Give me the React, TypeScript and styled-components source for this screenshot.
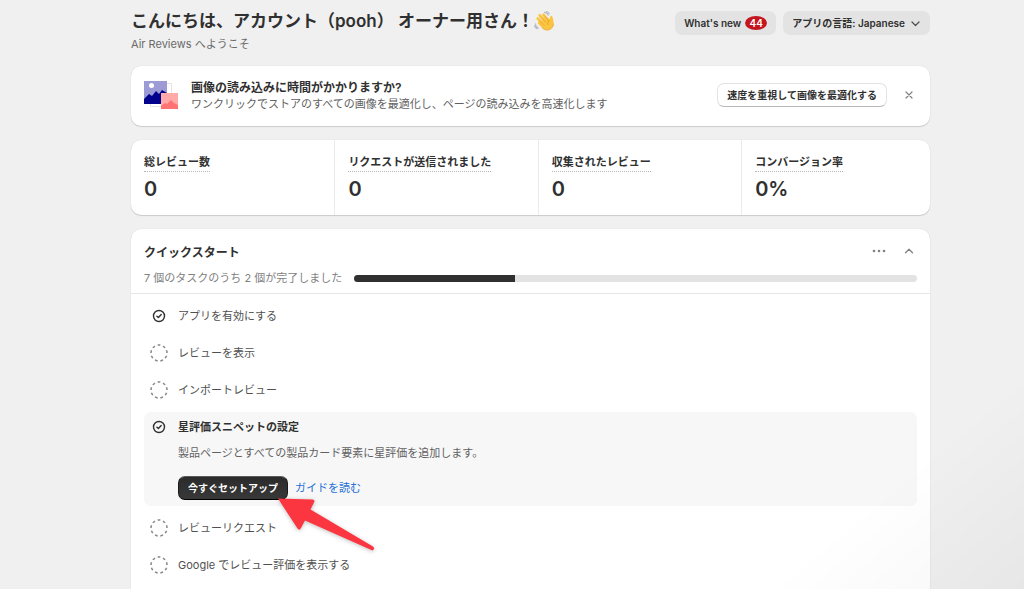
import React from 'react';
import styled, { createGlobalStyle, css } from 'styled-components';

const GlobalStyle = createGlobalStyle`
  *, *::before, *::after { box-sizing: border-box; }
  html, body { margin: 0; padding: 0; }
  body {
    background: #f0f0f0;
    color: #303030;
    font-family: Inter, "Noto Sans CJK JP", sans-serif;
    font-size: 11px;
    line-height: 16px;
  }
  button, a { font-family: inherit; }
  h1, h2, h3, p, dl, dd, ul { margin: 0; padding: 0; }
`;

const Shade = styled.div`
  position: fixed;
  inset: 0;
  pointer-events: none;
  background: linear-gradient(140deg, transparent 85%, rgba(0, 0, 0, 0.035) 100%);
`;

const Page = styled.main`
  min-height: 100vh;
  display: flex;
  flex-direction: column;
  gap: 14px;
  padding: 9px 94px 0 131px;
`;

const PageHeader = styled.header`
  display: flex;
  justify-content: space-between;
  align-items: flex-start;
  height: 43px;
`;

const Title = styled.h1`
  display: flex;
  align-items: center;
  font-size: 17px;
  line-height: 24px;
  font-weight: 600;
`;

const Subtitle = styled.p`
  color: #6a6a6a;
  line-height: 22px;
`;

const HeaderActions = styled.div`
  display: flex;
  gap: 7px;
  padding-top: 2px;
`;

const GreyButton = styled.button`
  display: flex;
  align-items: center;
  gap: 4px;
  height: 24px;
  padding: 0 9px;
  border: 0;
  border-radius: 7px;
  background: #e3e3e3;
  color: #303030;
  font-size: 10px;
  line-height: 16px;
  font-weight: 600;
`;

const Count = styled.span`
  padding: 0 4px;
  min-width: 22px;
  border-radius: 50%;
  background: #c5161f;
  color: #fff;
  font-size: 10px;
  line-height: 14px;
`;

const Card = styled.section`
  background: #fff;
  border-radius: 10px;
  box-shadow: 0 1px 1px rgba(0, 0, 0, 0.14), 0 0 1px rgba(0, 0, 0, 0.16);
`;

const Banner = styled(Card)`
  display: flex;
  align-items: center;
  height: 60px;
  padding: 0 13px 3px;
`;

const BannerText = styled.div`
  flex: 1;
  padding: 2px 0 0 12px;
`;

const BannerTitle = styled.h2`
  font-size: 12px;
  line-height: 17px;
  font-weight: 600;
`;

const Muted = styled.p`
  color: #616161;
  line-height: 17px;
`;

const OutlineButton = styled.button`
  height: 24px;
  padding: 0 9px;
  border: 1px solid #e3e3e3;
  border-bottom-color: #b8b8b8;
  border-radius: 7px;
  background: #fff;
  color: #303030;
  font-size: 10px;
  line-height: 16px;
  font-weight: 600;
`;

const IconButton = styled.button`
  display: flex;
  align-items: center;
  justify-content: center;
  width: 16px;
  height: 16px;
  padding: 0;
  border: 0;
  background: none;
  color: #808080;
`;

const BannerClose = styled(IconButton)`
  margin-left: 14px;
`;

const Stats = styled(Card).attrs({ as: 'dl' })`
  display: grid;
  grid-template-columns: 14fr 14fr 14fr 13fr;
  height: 75px;
`;

const Stat = styled.div`
  padding: 13px 13px 0;

  & + & { border-left: 1px solid #ebebeb; }
`;

const StatLabel = styled.dt`
  width: fit-content;
  border-bottom: 1px dotted #b5b5b5;
  line-height: 18px;
  font-weight: 600;
`;

const StatValue = styled.dd`
  padding-top: 5px;
  font-size: 20px;
  line-height: 24px;
  font-weight: 600;
`;

const Panel = styled(Card)`
  flex: 1;
  border-radius: 10px 10px 0 0;
`;

const PanelHeader = styled.div`
  padding: 14px 13px 0;
  height: 65px;
  border-bottom: 1px solid #e6e6e6;
`;

const PanelTop = styled.div`
  display: flex;
  align-items: flex-start;
  gap: 14px;
  height: 20px;
`;

const PanelTitle = styled.h2`
  flex: 1;
  font-size: 12px;
  line-height: 20px;
  font-weight: 600;
`;

const ProgressRow = styled.div`
  display: flex;
  align-items: center;
  gap: 12px;
  padding-top: 7px;
  color: #808080;
`;

const Track = styled.div`
  flex: 1;
  height: 7px;
  border-radius: 4px;
  overflow: hidden;
  background: #e3e3e3;
`;

const Bar = styled.div`
  height: 100%;
  background: #303030;
`;

const Tasks = styled.ul`
  display: flex;
  flex-direction: column;
  gap: 7px;
  padding: 7px 13px;
  list-style: none;
`;

const Task = styled.li<{ $open?: boolean }>`
  display: grid;
  grid-template-columns: 18px 1fr;
  column-gap: 10px;
  align-content: start;
  padding: 6px;
  border-radius: 7px;
  color: #505050;
  ${({ $open }) =>
    $open &&
    css`
      height: 94px;
      background: #f7f7f7;
    `}
`;

const TaskIcon = styled.span`
  display: flex;
  align-items: center;
  justify-content: center;
  width: 18px;
  height: 18px;
`;

const TaskName = styled.h3<{ $open?: boolean }>`
  font-size: 11px;
  line-height: 18px;
  font-weight: ${({ $open }) => ($open ? 600 : 400)};
  color: ${({ $open }) => ($open ? '#303030' : 'inherit')};
`;

const TaskBody = styled.div`
  grid-column: 2;
  padding-top: 9px;
`;

const TaskActions = styled.div`
  position: relative;
  display: flex;
  align-items: center;
  gap: 7px;
  padding-top: 14px;
`;

const DarkButton = styled.button`
  height: 24px;
  padding: 0 9px;
  border: 1px solid #1a1a1a;
  border-top-color: #5a5a5a;
  border-bottom-color: #000;
  border-radius: 7px;
  background: linear-gradient(#2b2b2b, #383838);
  color: #fff;
  font-size: 10px;
  line-height: 16px;
  font-weight: 600;
`;

const GuideLink = styled.a`
  color: #1f6fd6;
  text-decoration: none;
`;

const Arrow = styled.svg`
  position: absolute;
  left: 94px;
  top: 30px;
  filter: drop-shadow(0 1px 2px rgba(0, 0, 0, 0.25));
`;

const Wave = () => (
  <svg width="20" height="20" viewBox="0 0 42 42" aria-hidden="true">
    <g fill="none" stroke="#b9bdc1" strokeWidth="2.500" strokeLinecap="round">
      <path d="M22 3c3 0 6 2 8 6M26 1c3 1 5 3 6 5M3 27c0 4 2 7 6 9M1 31c1 3 3 5 5 6" />
    </g>
    <g fill="none" stroke="#fcc541" strokeWidth="6" strokeLinecap="round">
      <path d="M12 9l13 16M20 8l11 16M8 16l14 15M11 25l11 10" />
    </g>
    <path d="M14 23l15-10 4 5c0-7 3-10 5-7 2 4 3 9 3 14 0 9-6 15-14 15-6 0-10-5-16-11z" fill="#fcc541" />
    <path d="M15 12l10 12M23 10l8 12M11 20l11 11M41 26c0 8-6 14-14 14-4 0-7-2-10-5" fill="none" stroke="#e89f27" strokeWidth="1.500" />
    <path d="M29 29c0-4 1-7 4-9" fill="none" stroke="#e89f27" strokeWidth="2" />
  </svg>
);

const Pictures = () => (
  <svg width="35" height="30" viewBox="0 0 35 30" aria-hidden="true">
    <path d="M6.500 3.500h21v23h-21z" fill="#fff" stroke="#e4e4e8" />
    <path d="M0 1h23v23H0z" fill="#9c9bd6" />
    <circle cx="7.500" cy="5.500" r="2.500" fill="#fff" />
    <path d="M0 19l5-5 3 2 4-5 3 3 3-4 5 3v11H0z" fill="#02028c" />
    <path d="M17 13h17v16H17z" fill="#ffa9a9" />
    <path d="M17 26l4-3 2 1 4-4 3 3 4 2v4H17z" fill="#ff7373" />
  </svg>
);

const CheckIcon = () => (
  <svg width="14" height="14" viewBox="0 0 14 14" fill="none" stroke="#303030" strokeWidth="1.400" strokeLinecap="round" strokeLinejoin="round" aria-hidden="true">
    <circle cx="7" cy="7" r="5.500" />
    <path d="M4.900 7.200l1.500 1.400 2.800-3" />
  </svg>
);

const DashedIcon = () => (
  <svg width="18" height="18" viewBox="0 0 18 18" fill="none" aria-hidden="true">
    <circle cx="9" cy="9" r="8" stroke="#84878b" strokeWidth="1.500" pathLength="90" strokeDasharray="5 5" strokeDashoffset="5" />
  </svg>
);

const stats = [
  ['総レビュー数', '0'],
  ['リクエストが送信されました', '0'],
  ['収集されたレビュー', '0'],
  ['コンバージョン率', '0%'],
];

const tasks = [
  { name: 'アプリを有効にする', done: true },
  { name: 'レビューを表示' },
  { name: 'インポートレビュー' },
  { name: '星評価スニペットの設定', done: true, open: true },
  { name: 'レビューリクエスト' },
  { name: 'Google でレビュー評価を表示する' },
];

const completed = { done: 2, total: 7 };

export default function App() {
  return (
    <>
      <GlobalStyle />
      <Page lang="ja">
        <PageHeader>
          <div>
            <Title>
              こんにちは、アカウント（pooh） オーナー用さん！
              <Wave />
            </Title>
            <Subtitle>Air Reviews へようこそ</Subtitle>
          </div>
          <HeaderActions>
            <GreyButton type="button">
              What's new <Count>44</Count>
            </GreyButton>
            <GreyButton type="button">
              アプリの言語: Japanese
              <svg width="12" height="12" viewBox="0 0 12 12" fill="none" stroke="#505050" strokeWidth="1.300" strokeLinecap="round" strokeLinejoin="round" aria-hidden="true">
                <path d="M3 5l3.500 3.500L10 5" />
              </svg>
            </GreyButton>
          </HeaderActions>
        </PageHeader>

        <Banner>
          <Pictures />
          <BannerText>
            <BannerTitle>画像の読み込みに時間がかかりますか?</BannerTitle>
            <Muted>ワンクリックでストアのすべての画像を最適化し、ページの読み込みを高速化します</Muted>
          </BannerText>
          <OutlineButton type="button">速度を重視して画像を最適化する</OutlineButton>
          <BannerClose type="button" aria-label="閉じる">
            <svg width="8" height="8" viewBox="0 0 8 8" fill="none" stroke="currentColor" strokeWidth="1.200" strokeLinecap="round">
              <path d="M1 1l6 6M7 1L1 7" />
            </svg>
          </BannerClose>
        </Banner>

        <Stats>
          {stats.map(([label, value]) => (
            <Stat key={label}>
              <StatLabel>{label}</StatLabel>
              <StatValue>{value}</StatValue>
            </Stat>
          ))}
        </Stats>

        <Panel>
          <PanelHeader>
            <PanelTop>
              <PanelTitle>クイックスタート</PanelTitle>
              <IconButton type="button" aria-label="その他">
                <svg width="14" height="4" viewBox="0 0 14 4" fill="currentColor">
                  <circle cx="2" cy="2" r="1.300" />
                  <circle cx="7" cy="2" r="1.300" />
                  <circle cx="12" cy="2" r="1.300" />
                </svg>
              </IconButton>
              <IconButton type="button" aria-label="折りたたむ">
                <svg width="10" height="6" viewBox="0 0 10 6" fill="none" stroke="currentColor" strokeWidth="1.300" strokeLinecap="round" strokeLinejoin="round">
                  <path d="M1.500 4.800L5 1.300l3.500 3.500" />
                </svg>
              </IconButton>
            </PanelTop>
            <ProgressRow>
              <span id="progress-text">7 個のタスクのうち 2 個が完了しました</span>
              <Track role="progressbar" aria-labelledby="progress-text" aria-valuenow={completed.done} aria-valuemin={0} aria-valuemax={completed.total}>
                <Bar style={{ width: `${(completed.done / completed.total) * 100}%` }} />
              </Track>
            </ProgressRow>
          </PanelHeader>
          <Tasks>
            {tasks.map(({ name, done, open }) => (
              <Task key={name} $open={open}>
                <TaskIcon>{done ? <CheckIcon /> : <DashedIcon />}</TaskIcon>
                <TaskName $open={open}>{name}</TaskName>
                {open && (
                  <TaskBody>
                    <Muted>製品ページとすべての製品カード要素に星評価を追加します。</Muted>
                    <TaskActions>
                      <DarkButton type="button">今すぐセットアップ</DarkButton>
                      <GuideLink href="#guide">ガイドを読む</GuideLink>
                      <Arrow width="108" height="60" viewBox="0 0 108 60" aria-hidden="true">
                        <path
                          d="M6 6.500L40.500 7.500Q43.500 8 42 10.500L38.500 17.500L101 54.500Q103.500 57 100.500 58.500L33 28.500L29 36Q27.500 39 25.500 36.500Z"
                          fill="#fb3640"
                        />
                      </Arrow>
                    </TaskActions>
                  </TaskBody>
                )}
              </Task>
            ))}
          </Tasks>
        </Panel>
      </Page>
      <Shade />
    </>
  );
}
